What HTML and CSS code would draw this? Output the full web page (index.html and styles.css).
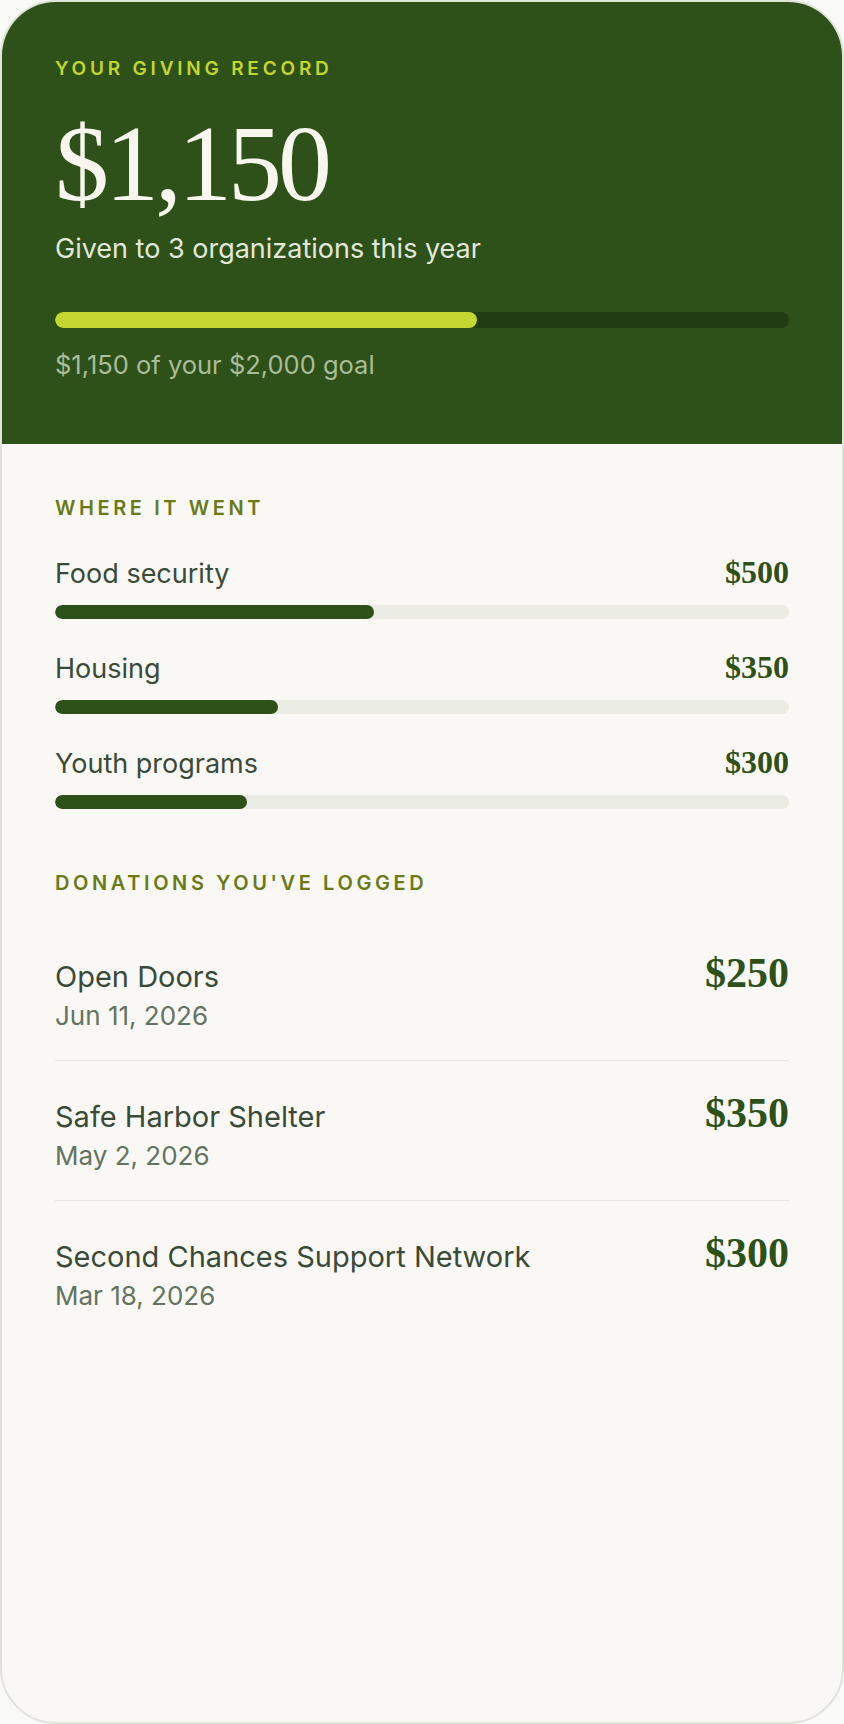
FILE: index.html
```html
<!DOCTYPE html>
<html lang="en">
<head>
    <meta charset="UTF-8">
    <meta name="viewport" content="width=device-width, initial-scale=1.0">
    <title>Your Giving Record</title>
    <link rel="stylesheet" href="styles.css">
</head>
<body>
    <div class="card">
        <div class="hero">
            <div class="eyebrow">Your giving record</div>
            <div class="total">$1,150</div>
            <div class="subtitle">Given to 3 organizations this year</div>
            <div class="goal-track">
                <div class="goal-fill" style="width: 57.5%;"></div>
            </div>
            <div class="goal-text">$1,150 of your $2,000 goal</div>
        </div>

        <div class="content">
            <h2 class="section-label">Where it went</h2>
            <ul class="categories">
                <li class="category">
                    <div class="category-head">
                        <span class="category-name">Food security</span>
                        <span class="category-amount">$500</span>
                    </div>
                    <div class="track"><div class="fill" style="width: 43.5%;"></div></div>
                </li>
                <li class="category">
                    <div class="category-head">
                        <span class="category-name">Housing</span>
                        <span class="category-amount">$350</span>
                    </div>
                    <div class="track"><div class="fill" style="width: 30.4%;"></div></div>
                </li>
                <li class="category">
                    <div class="category-head">
                        <span class="category-name">Youth programs</span>
                        <span class="category-amount">$300</span>
                    </div>
                    <div class="track"><div class="fill" style="width: 26.1%;"></div></div>
                </li>
            </ul>

            <h2 class="section-label">Donations you've logged</h2>
            <ul class="donations">
                <li class="donation">
                    <div class="donation-info">
                        <div class="donation-name">Open Doors</div>
                        <div class="donation-date">Jun 11, 2026</div>
                    </div>
                    <div class="donation-amount">$250</div>
                </li>
                <li class="donation">
                    <div class="donation-info">
                        <div class="donation-name">Safe Harbor Shelter</div>
                        <div class="donation-date">May 2, 2026</div>
                    </div>
                    <div class="donation-amount">$350</div>
                </li>
                <li class="donation">
                    <div class="donation-info">
                        <div class="donation-name">Second Chances Support Network</div>
                        <div class="donation-date">Mar 18, 2026</div>
                    </div>
                    <div class="donation-amount">$300</div>
                </li>
            </ul>
        </div>
    </div>
</body>
</html>
```

FILE: styles.css
```css
* {
    box-sizing: border-box;
}

html {
    background-color: #f9f9f6;
}

body {
    font-family: Inter, "Noto Sans", sans-serif;
    margin: 0;
    color: #3a4a38;
}

.card {
    min-height: 100vh;
    background: #f9f8f4;
    border: 2px solid #dfe3d8;
    border-radius: 56px;
    overflow: hidden;
}

.hero {
    background-color: #2e5019;
    padding: 55px 53px 64px;
}

.eyebrow,
.section-label {
    font-size: 19px;
    line-height: 24px;
    font-weight: 600;
    letter-spacing: 0.2em;
    text-transform: uppercase;
}

.eyebrow {
    color: #c4d631;
}

.total {
    margin-top: 30px;
    font-family: "Liberation Serif", serif;
    font-size: 108px;
    line-height: 106px;
    letter-spacing: -4px;
    color: #f8f6ee;
}

.subtitle {
    margin-top: 16px;
    font-size: 27px;
    line-height: 32px;
    color: #e2e8d9;
}

.goal-track {
    margin-top: 47px;
    height: 16px;
    border-radius: 8px;
    background-color: #203c11;
    overflow: hidden;
}

.goal-fill {
    height: 100%;
    border-radius: 8px;
    background-color: #c4d631;
}

.goal-text {
    margin-top: 22px;
    font-size: 25.5px;
    line-height: 30px;
    color: #a9bd97;
}

.content {
    padding: 52px 53px 80px;
}

.section-label {
    margin: 0;
    font-size: 20px;
    letter-spacing: 0.18em;
    color: #6a7a16;
}

ul {
    list-style-type: none;
    margin: 0;
    padding: 0;
}

.categories {
    margin-top: 36px;
    margin-bottom: 62px;
    display: flex;
    flex-direction: column;
    gap: 32px;
}

.category-head {
    display: flex;
    justify-content: space-between;
    align-items: baseline;
    font-size: 27px;
    line-height: 34px;
}

.category-amount {
    font-family: "Liberation Serif", serif;
    font-size: 32px;
    line-height: 32px;
    font-weight: 700;
    color: #2e5019;
}

.track {
    margin-top: 14px;
    height: 14px;
    border-radius: 7px;
    background-color: #eaebe3;
    overflow: hidden;
}

.fill {
    height: 100%;
    border-radius: 7px;
    background-color: #2e5019;
}

.donations {
    margin-top: 26px;
}

.donation {
    display: flex;
    justify-content: space-between;
    align-items: baseline;
    padding: 38px 0 28px;
    border-bottom: 1px solid #e6e6df;
}

.donation:last-child {
    border-bottom: none;
}

.donation-name {
    font-size: 29px;
    line-height: 34px;
}

.donation-date {
    margin-top: 6px;
    font-size: 26px;
    line-height: 32px;
    color: #647260;
}

.donation-amount {
    font-family: "Liberation Serif", serif;
    font-size: 42px;
    line-height: 28px;
    font-weight: 700;
    color: #2e5019;
}
```
